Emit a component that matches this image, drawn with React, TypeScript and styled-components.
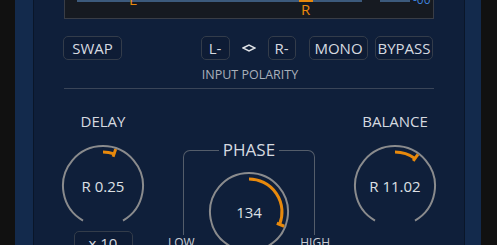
import React from "react";
import styled, { createGlobalStyle } from "styled-components";

const Global = createGlobalStyle`
  html, body { margin: 0; padding: 0; background: #111111; overflow: hidden; }
  body { font-family: "Open Sans", "DejaVu Sans", sans-serif; }
  * { box-sizing: border-box; }
`;

const Page = styled.div`
  display: flex;
  width: 497px;
  height: 245px;
  padding-left: 15px;
  background: #111111;
`;

const Frame = styled.div`
  width: 466px;
  height: 100%;
  background: #132a4c;
  padding: 0 16px 0 18px;
  display: flex;
`;

const Panel = styled.div`
  flex: 1;
  background: #0f1f3a;
  border-left: 1px solid #0a1629;
  border-right: 1px solid #0a1629;
  display: flex;
  flex-direction: column;
  color: #d6dae0;
  overflow: hidden;
  & > * { flex-shrink: 0; }
`;

const Meter = styled.div`
  position: relative;
  height: 19px;
  margin: 0 30px;
  background: #161a21;
  border: 1px solid #393d46;
  border-top: none;
`;

const Bar = styled.div<{ $left: number; $width: number }>`
  position: absolute;
  top: 0;
  left: ${(p) => p.$left}px;
  width: ${(p) => p.$width}px;
  height: 2px;
  background: #3c5a7c;
`;

const Marker = styled.div<{ $left: number }>`
  position: absolute;
  top: 0;
  left: ${(p) => p.$left}px;
  width: 14px;
  height: 2px;
  background: #e8890c;
`;

const ChannelLabel = styled.span<{ $left: number; $top: number }>`
  position: absolute;
  left: ${(p) => p.$left}px;
  top: ${(p) => p.$top}px;
  font-size: 15px;
  line-height: 15px;
  color: #e8890c;
`;

const DbLabel = styled.span`
  position: absolute;
  left: 348px;
  top: -6px;
  font-size: 12px;
  line-height: 12px;
  color: #3d80d8;
`;

const ButtonRow = styled.div`
  display: grid;
  grid-template-columns: 1fr auto 1fr;
  align-items: center;
  margin: 17px 31px 0 29px;
`;

const Group = styled.div<{ $justify: string; $gap: number }>`
  display: flex;
  align-items: center;
  justify-content: ${(p) => p.$justify};
  gap: ${(p) => p.$gap}px;
`;

const Button = styled.button<{ $width?: number }>`
  flex-shrink: 0;
  height: 24px;
  width: ${(p) => (p.$width ? `${p.$width}px` : "auto")};
  padding: 0 4px;
  margin: 0;
  background: #0e1c35;
  border: 1px solid #333c4a;
  border-radius: 5px;
  color: #d6dae0;
  font-family: "Open Sans", "DejaVu Sans", sans-serif;
  font-size: 15px;
  line-height: 22px;
  display: flex;
  align-items: center;
  justify-content: center;
`;

const Caption = styled.div`
  margin-top: 7px;
  text-align: center;
  font-size: 12.5px;
  line-height: 15px;
  color: #a9b0ba;
  padding-left: 2px;
`;

const Divider = styled.div`
  height: 1px;
  margin: 6px 30px 0 30px;
  background: #3a4558;
`;

const Controls = styled.div`
  display: grid;
  grid-template-columns: 80px 1fr 80px;
  margin: 22px 29px 0 29px;
`;

const Column = styled.div<{ $pad?: number }>`
  display: flex;
  flex-direction: column;
  align-items: center;
  padding-top: ${(p) => p.$pad ?? 0}px;
  & > * { flex-shrink: 0; }
`;

const Title = styled.div`
  font-size: 15px;
  line-height: 20px;
  color: #d6dae0;
  margin-bottom: 13px;
`;

const KnobWrap = styled.div`
  display: grid;
  width: 84px;
  height: 84px;
  place-items: center;
  & > * { grid-area: 1 / 1; }
`;

const KnobValue = styled.span`
  font-size: 15px;
  line-height: 20px;
  color: #dde0e5;
`;

const PhaseBox = styled.fieldset`
  margin: 0;
  padding: 0;
  min-width: 0;
  width: 132px;
  border: 1px solid #545d6a;
  border-bottom: none;
  border-radius: 7px 7px 0 0;
  display: flex;
  flex-direction: column;
  align-items: center;
`;

const PhaseLegend = styled.legend`
  margin: 0 auto;
  padding: 0 4px;
  font-size: 17px;
  line-height: 20px;
  color: #d6dae0;
`;

const PhaseBody = styled.div`
  height: 75px;
  padding-top: 10px;
  overflow: visible;
`;

const RangeRow = styled.div`
  width: 162px;
  display: flex;
  justify-content: space-between;
  font-size: 12px;
  line-height: 15px;
  color: #c9ced6;
`;

const SmallButtonGap = styled.div`
  height: 3px;
`;

function polar(cx: number, cy: number, r: number, deg: number) {
  const a = (deg * Math.PI) / 180;
  return [cx + r * Math.sin(a), cy - r * Math.cos(a)];
}

function Knob({ value, angle, r }: { value: string; angle: number; r: number }) {
  const c = 42;
  const [sx, sy] = polar(c, c, r, -150);
  const [ex, ey] = polar(c, c, r, 150);
  const ro = r - 6;
  const [ox, oy] = polar(c, c, ro, angle);
  const [t1x, t1y] = polar(c, c, ro - 3, angle);
  const [t2x, t2y] = polar(c, c, r - 1, angle);
  return (
    <KnobWrap>
      <svg width="84" height="84" viewBox="0 0 84 84">
        <path
          d={`M ${sx} ${sy} A ${r} ${r} 0 1 1 ${ex} ${ey}`}
          fill="none"
          stroke="#8a8b8d"
          strokeWidth="2"
        />
        <path
          d={`M ${c} ${c - ro} A ${ro} ${ro} 0 ${angle > 180 ? 1 : 0} 1 ${ox} ${oy}`}
          fill="none"
          stroke="#e8890c"
          strokeWidth="3"
        />
        <line x1={t1x} y1={t1y} x2={t2x} y2={t2y} stroke="#e8890c" strokeWidth="3" />
      </svg>
      <KnobValue>{value}</KnobValue>
    </KnobWrap>
  );
}

function Diamond() {
  return (
    <svg width="14" height="8" viewBox="0 0 14 8">
      <path d="M1 4 L7 1 L13 4 L7 7 Z" fill="none" stroke="#dfe2e6" strokeWidth="1.5" />
    </svg>
  );
}

export default function App() {
  return (
    <>
      <Global />
      <Page>
        <Frame>
          <Panel>
            <Meter>
              <Bar $left={12} $width={285} />
              <Bar $left={315} $width={30} />
              <Marker $left={234} />
              <ChannelLabel $left={64} $top={-8}>L</ChannelLabel>
              <ChannelLabel $left={236} $top={2}>R</ChannelLabel>
              <DbLabel>-00</DbLabel>
            </Meter>
            <ButtonRow>
              <Group $justify="flex-start" $gap={0}>
                <Button $width={59}>SWAP</Button>
              </Group>
              <Group $justify="center" $gap={12}>
                <Button $width={29}>L-</Button>
                <Diamond />
                <Button $width={28}>R-</Button>
              </Group>
              <Group $justify="flex-end" $gap={7}>
                <Button $width={59}>MONO</Button>
                <Button $width={58}>BYPASS</Button>
              </Group>
            </ButtonRow>
            <Caption>INPUT POLARITY</Caption>
            <Divider />
            <Controls>
              <Column>
                <Title>DELAY</Title>
                <Knob value="R 0.25" angle={19} r={40} />
                <SmallButtonGap />
                <Button $width={59}>x 10</Button>
              </Column>
              <Column $pad={29}>
                <PhaseBox>
                  <PhaseLegend>PHASE</PhaseLegend>
                  <PhaseBody>
                    <Knob value="134" angle={112} r={39} />
                  </PhaseBody>
                </PhaseBox>
                <RangeRow>
                  <span>LOW</span>
                  <span>HIGH</span>
                </RangeRow>
              </Column>
              <Column>
                <Title>BALANCE</Title>
                <Knob value="R 11.02" angle={36} r={40} />
              </Column>
            </Controls>
          </Panel>
        </Frame>
      </Page>
    </>
  );
}
